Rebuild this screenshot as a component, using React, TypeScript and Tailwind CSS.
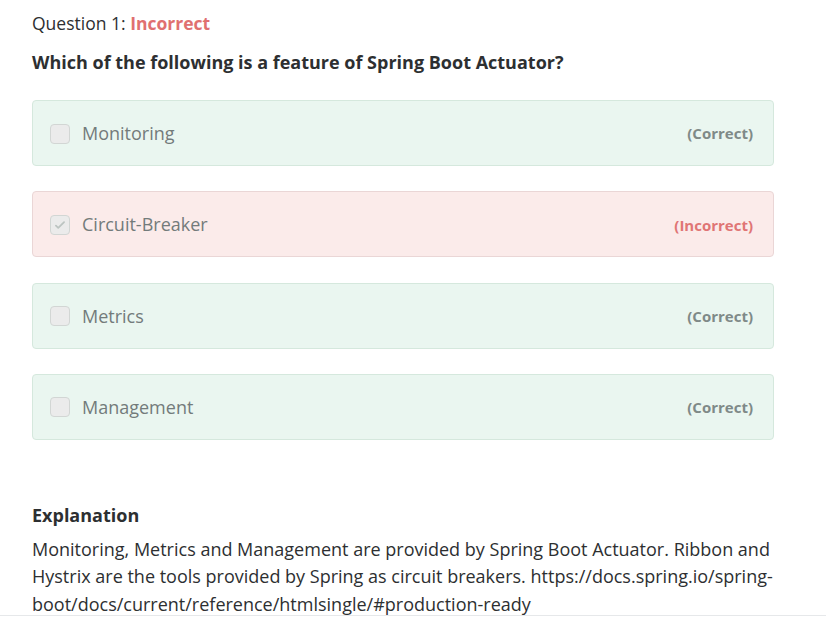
import { useState } from 'react'

interface Answer {
    id: number
    label: string
    checked: boolean
    correct: boolean
}

const answers: Answer[] = [
    { id: 1, label: 'Monitoring', checked: false, correct: true },
    { id: 2, label: 'Circuit-Breaker', checked: true, correct: false },
    { id: 3, label: 'Metrics', checked: false, correct: true },
    { id: 4, label: 'Management', checked: false, correct: true },
]

export default function App() {
    const [items] = useState(answers)

    return (
        <div
            className="w-[826px] h-[617px] overflow-hidden bg-white text-[#2d2f31]"
            style={{ fontFamily: '"Open Sans", "Segoe UI", Arial, sans-serif' }}
        >
            <div className="h-[616px] border-b border-[#e6e8ea]">
                <div className="w-[742px] ml-8 pt-[10px]">
                    <div className="text-[17.5px] leading-[26px]">
                        Question 1: <span className="font-bold text-[#e07070]">Incorrect</span>
                    </div>

                    <h2 className="mt-[13px] text-[18px] leading-[26px] font-bold">
                        Which of the following is a feature of Spring Boot Actuator?
                    </h2>

                    <div className="mt-[25px] flex flex-col gap-[25.3px]">
                        {items.map((a) => (
                            <div
                                key={a.id}
                                className={
                                    a.correct
                                        ? 'h-[66px] flex items-center pl-[17px] pr-5 pt-px rounded border border-[#d5e8dd] bg-[#eaf6f0]'
                                        : 'h-[66px] flex items-center pl-[17px] pr-5 pt-px rounded border border-[#ead6d6] bg-[#fbebea]'
                                }
                            >
                                {/* Чекбокс (отключён) */}
                                <div className="w-5 h-5 rounded-sm border border-[#d2d6d4] bg-[#ebebeb] flex items-center justify-center">
                                    {a.checked && (
                                        <svg className="w-3.5 h-3.5" viewBox="0 0 24 24" fill="none" stroke="#bcc4c1" strokeWidth={3}>
                                            <path strokeLinecap="round" strokeLinejoin="round" d="M5 13l4 4L19 7" />
                                        </svg>
                                    )}
                                </div>
                                <span className="ml-3 text-[18px] text-[#737b7b]">{a.label}</span>
                                <span
                                    className={
                                        a.correct
                                            ? 'ml-auto text-[15px] font-bold text-[#7f8a88]'
                                            : 'ml-auto text-[15px] font-bold text-[#e07575]'
                                    }
                                >
                                    {a.correct ? '(Correct)' : '(Incorrect)'}
                                </span>
                            </div>
                        ))}
                    </div>

                    <h3 className="mt-[62px] text-[18px] leading-[26px] font-bold">Explanation</h3>
                    <p className="mt-2 text-[18px] leading-[27.5px]">
                        Monitoring, Metrics and Management are provided by Spring Boot Actuator. Ribbon and Hystrix are the
                        tools provided by Spring as circuit breakers. https://docs.spring.io/spring-boot/docs/current/reference/htmlsingle/#production-ready
                    </p>
                </div>
            </div>
        </div>
    )
}
